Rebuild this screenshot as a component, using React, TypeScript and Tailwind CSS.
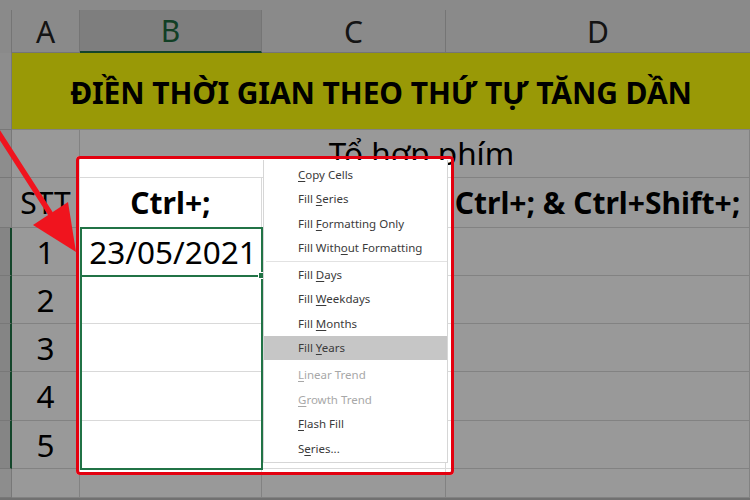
import React from 'react';

const SHEET_FONT = { fontFamily: '"Noto Sans", "Open Sans", sans-serif' };
const MENU_FONT = { fontFamily: '"Noto Sans", "Liberation Sans", sans-serif' };

type MenuItem = { pre: string; u: string; post: string; disabled?: boolean; active?: boolean };

const menuTop: MenuItem[] = [
  { pre: '', u: 'C', post: 'opy Cells' },
  { pre: 'Fill ', u: 'S', post: 'eries' },
  { pre: 'Fill ', u: 'F', post: 'ormatting Only' },
  { pre: 'Fill With', u: 'o', post: 'ut Formatting' },
];

const menuDates: MenuItem[] = [
  { pre: 'Fill ', u: 'D', post: 'ays' },
  { pre: 'Fill ', u: 'W', post: 'eekdays' },
  { pre: 'Fill ', u: 'M', post: 'onths' },
  { pre: 'Fill ', u: 'Y', post: 'ears', active: true },
];

const menuRest: MenuItem[] = [
  { pre: '', u: 'L', post: 'inear Trend', disabled: true },
  { pre: '', u: 'G', post: 'rowth Trend', disabled: true },
  { pre: '', u: 'F', post: 'lash Fill' },
  { pre: 'S', u: 'e', post: 'ries...' },
];

function Item({ item }: { item: MenuItem }) {
  return (
    <div
      className={`h-[24.5px] flex items-center pl-[34px] text-[11.5px] ${
        item.active ? 'bg-[#c6c6c6]' : ''
      } ${item.disabled ? 'text-[#a8a8a8]' : 'text-[#3a3a3a]'}`}
    >
      <span className="whitespace-pre">
        {item.pre}
        <span className="underline underline-offset-2">{item.u}</span>
        {item.post}
      </span>
    </div>
  );
}

// gridline colour before the dim overlay
const line = 'border-[#d9d9d9]';

function RowHead({ selected }: { selected?: boolean }) {
  return (
    <div
      className={`w-[12px] shrink-0 border-b border-r ${
        selected ? 'bg-[#dedede] border-r-[#217346] border-r-2' : 'bg-[#ececec]'
      } border-[#c8c8c8]`}
    />
  );
}

function Cell({ w, children, bold, className = '' }: { w: string; children?: React.ReactNode; bold?: boolean; className?: string }) {
  return (
    <div
      className={`${w} shrink-0 border-r border-b ${line} flex items-center justify-center text-black ${
        bold ? 'font-bold text-[30px]' : 'text-[31.5px]'
      } ${className}`}
    >
      {children}
    </div>
  );
}

function DataRow({ h, n, b }: { h: string; n?: string; b?: string }) {
  return (
    <div className={`flex ${h}`}>
      <RowHead selected={!!n} />
      <Cell w="w-[68px]">{n}</Cell>
      <Cell w="w-[182px]" className="pl-[5px]">{b}</Cell>
      <Cell w="w-[184px]" />
      <Cell w="w-[304px]" />
    </div>
  );
}

export default function App() {
  return (
    <div className="relative w-[750px] h-[500px] overflow-hidden bg-white" style={SHEET_FONT}>
      {/* sheet */}
      <div className="flex flex-col">
        <div className="h-[10px] bg-[#e6e6e6]" />
        <div className="flex h-[43px] text-[30px] text-[#222]">
          <div className="w-[12px] shrink-0 bg-[#e6e6e6] border-r border-[#c4c4c4]" />
          <div className="w-[68px] shrink-0 bg-[#e6e6e6] border-r border-b border-[#c4c4c4] flex items-center justify-center">A</div>
          <div className="w-[182px] shrink-0 bg-[#d2d2d2] border-r border-[#c4c4c4] border-b-2 border-b-[#217346] flex items-center justify-center text-[#1d6a3f]">B</div>
          <div className="w-[184px] shrink-0 bg-[#e6e6e6] border-r border-b border-[#c4c4c4] flex items-center justify-center">C</div>
          <div className="w-[304px] shrink-0 bg-[#e6e6e6] border-b border-[#c4c4c4] flex items-center justify-center">D</div>
        </div>

        <div className="flex h-[77px]">
          <RowHead />
          <div className="flex-1 bg-[#ffff0a] border-b border-[#d9d9d9] flex items-center justify-center text-[30px] font-bold text-black tracking-[-0.1px] pt-[3px]">
            ĐIỀN THỜI GIAN THEO THỨ TỰ TĂNG DẦN
          </div>
        </div>

        <div className="flex h-[48px]">
          <RowHead />
          <Cell w="w-[68px]" />
          <Cell w="w-[670px]" className="pb-[2px] pl-[14px]">Tổ hợp phím</Cell>
        </div>

        <div className="flex h-[50px]">
          <RowHead />
          <Cell w="w-[68px]" className="!text-[30px]">STT</Cell>
          <Cell w="w-[182px]" bold>Ctrl+;</Cell>
          <Cell w="w-[184px]" bold>Ctrl+Shift+;</Cell>
          <Cell w="w-[304px]" bold>Ctrl+; &amp; Ctrl+Shift+;</Cell>
        </div>

        <DataRow h="h-[48px]" n="1" b="23/05/2021" />
        <DataRow h="h-[48px]" n="2" />
        <DataRow h="h-[48px]" n="3" />
        <DataRow h="h-[49px]" n="4" />
        <DataRow h="h-[48px]" n="5" />
        <DataRow h="h-[29px]" />
        <div className="h-[2px] bg-[#bdbdbd]" />
      </div>

      {/* fill range + active cell */}
      <div className="absolute left-[80px] top-[227px] w-[183px] h-[243px] border-2 border-[#217346]" />
      <div className="absolute left-[80px] top-[275px] w-[183px] h-[2px] bg-[#217346]" />
      <div className="absolute left-[258px] top-[272px] w-[7px] h-[7px] bg-[#217346] border border-white" />

      {/* spotlight box */}
      <div className="absolute left-[76px] top-[156px] w-[378px] h-[319px] border-[3px] border-[#e3000f] rounded-[4px] shadow-[0_0_0_2000px_rgba(0,0,0,0.4)]" />

      {/* autofill menu */}
      <div
        className="absolute left-[263px] top-[160px] w-[185px] h-[303px] bg-white border-l border-b border-r border-[#d6d6d6] pt-[2px]"
        style={MENU_FONT}
      >
        {menuTop.map((m) => (
          <Item key={m.pre + m.u + m.post} item={m} />
        ))}
        <div className="h-[2px] flex items-center pl-[2px]">
          <div className="h-px w-full bg-[#e2e2e2]" />
        </div>
        {menuDates.map((m) => (
          <Item key={m.pre + m.u + m.post} item={m} />
        ))}
        <div className="h-[2.5px]" />
        {menuRest.map((m) => (
          <Item key={m.pre + m.u + m.post} item={m} />
        ))}
      </div>

      {/* red arrow */}
      <svg className="absolute left-0 top-0 pointer-events-none" width="750" height="500" viewBox="0 0 750 500">
        <line x1="-6" y1="126" x2="50" y2="213" stroke="#f0141e" strokeWidth="5.5" strokeLinecap="round" />
        <polygon points="76,252 68,202 33,225" fill="#f0141e" />
      </svg>
    </div>
  );
}
